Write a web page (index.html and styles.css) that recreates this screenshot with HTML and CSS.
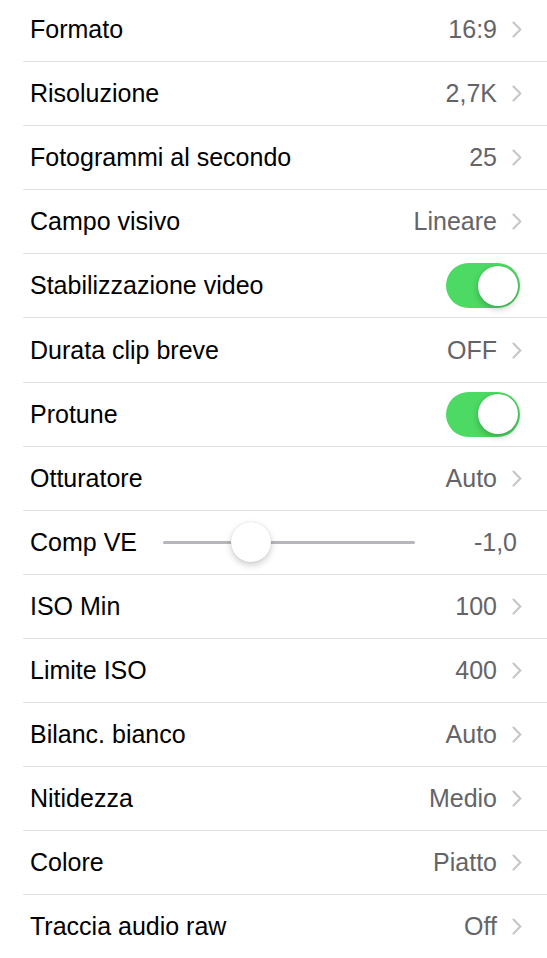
FILE: index.html
```html
<!DOCTYPE html>
<html lang="it">
<head>
  <meta charset="UTF-8" />
  <meta name="viewport" content="width=device-width, initial-scale=1.0" />
  <title>Impostazioni video</title>
  <link rel="stylesheet" href="styles.css">
</head>
<body>
  <ul class="settings">
    <li class="row"><span class="label">Formato</span><span class="value">16:9</span><span class="chevron"></span></li>
    <li class="row"><span class="label">Risoluzione</span><span class="value">2,7K</span><span class="chevron"></span></li>
    <li class="row"><span class="label">Fotogrammi al secondo</span><span class="value">25</span><span class="chevron"></span></li>
    <li class="row"><span class="label">Campo visivo</span><span class="value">Lineare</span><span class="chevron"></span></li>
    <li class="row"><span class="label">Stabilizzazione video</span><span class="toggle on"><span class="knob"></span></span></li>
    <li class="row"><span class="label">Durata clip breve</span><span class="value">OFF</span><span class="chevron"></span></li>
    <li class="row"><span class="label">Protune</span><span class="toggle on"><span class="knob"></span></span></li>
    <li class="row"><span class="label">Otturatore</span><span class="value">Auto</span><span class="chevron"></span></li>
    <li class="row slider-row">
      <span class="label">Comp VE</span>
      <span class="slider">
        <span class="track"></span>
        <span class="thumb" style="left: 35%"></span>
      </span>
      <span class="value slider-value">-1,0</span>
    </li>
    <li class="row"><span class="label">ISO Min</span><span class="value">100</span><span class="chevron"></span></li>
    <li class="row"><span class="label">Limite ISO</span><span class="value">400</span><span class="chevron"></span></li>
    <li class="row"><span class="label">Bilanc. bianco</span><span class="value">Auto</span><span class="chevron"></span></li>
    <li class="row"><span class="label">Nitidezza</span><span class="value">Medio</span><span class="chevron"></span></li>
    <li class="row"><span class="label">Colore</span><span class="value">Piatto</span><span class="chevron"></span></li>
    <li class="row"><span class="label">Traccia audio raw</span><span class="value">Off</span><span class="chevron"></span></li>
  </ul>
</body>
</html>
```

FILE: styles.css
```css
body {
  margin: 0;
  background: #ffffff;
  font-family: 'Liberation Sans', Arial, sans-serif;
  color: #000000;
  overflow: hidden;
}

.settings {
  list-style: none;
  margin: -2px 0 0 23px;
  padding: 0;
}

.row {
  display: flex;
  align-items: center;
  box-sizing: border-box;
  height: 64.1px;
  padding: 0 25px 0 7px;
  border-bottom: 1px solid #e0e0e3;
  font-size: 25px;
}

.label {
  flex: 1;
  white-space: nowrap;
}

.value {
  color: #646468;
  white-space: nowrap;
}

.chevron {
  width: 10px;
  height: 17px;
  margin-left: 15px;
  background: no-repeat center / 10px 17px
    url("data:image/svg+xml,%3Csvg xmlns='http://www.w3.org/2000/svg' viewBox='0 0 10 17'%3E%3Cpath d='M1.5 1.5 L8.3 8.5 L1.5 15.5' fill='none' stroke='%23c7c7cc' stroke-width='2.2' stroke-linecap='round' stroke-linejoin='round'/%3E%3C/svg%3E");
}

/* switch */
.toggle {
  position: relative;
  width: 74px;
  height: 45px;
  margin-right: 2px;
  border-radius: 23px;
  background: #4cd964;
}

.toggle .knob {
  position: absolute;
  top: 2.5px;
  right: 2.5px;
  width: 40px;
  height: 40px;
  border-radius: 50%;
  background: #ffffff;
  box-shadow: 0 3px 6px rgba(0, 0, 0, 0.22), 0 0 1px rgba(0, 0, 0, 0.2);
}

/* slider */
.slider-row .label {
  flex: 0 0 133px;
}

.slider {
  position: relative;
  width: 252px;
  height: 40px;
  display: flex;
  align-items: center;
}

.track {
  width: 100%;
  height: 3px;
  border-radius: 2px;
  background: #b6b6bb;
}

.thumb {
  position: absolute;
  top: 0;
  width: 40px;
  height: 40px;
  margin-left: -20px;
  border-radius: 50%;
  background: #ffffff;
  box-shadow: 0 3px 7px rgba(0, 0, 0, 0.2), 0 0 1px rgba(0, 0, 0, 0.18);
}

.slider-value {
  flex: 1;
  text-align: right;
  margin-right: 5px;
}
```
